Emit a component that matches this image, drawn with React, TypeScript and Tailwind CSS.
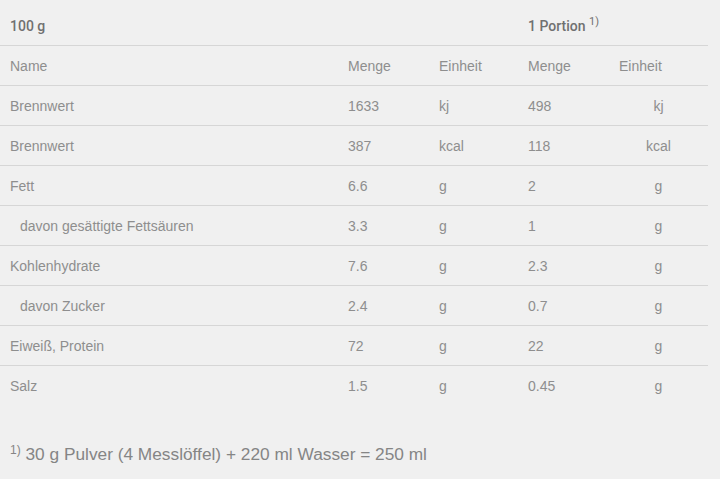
const rows = [
  { name: "Brennwert", m1: "1633", u1: "kj", m2: "498", u2: "kj" },
  { name: "Brennwert", m1: "387", u1: "kcal", m2: "118", u2: "kcal" },
  { name: "Fett", m1: "6.6", u1: "g", m2: "2", u2: "g" },
  { name: "davon gesättigte Fettsäuren", m1: "3.3", u1: "g", m2: "1", u2: "g", sub: true },
  { name: "Kohlenhydrate", m1: "7.6", u1: "g", m2: "2.3", u2: "g" },
  { name: "davon Zucker", m1: "2.4", u1: "g", m2: "0.7", u2: "g", sub: true },
  { name: "Eiweiß, Protein", m1: "72", u1: "g", m2: "22", u2: "g" },
  { name: "Salz", m1: "1.5", u1: "g", m2: "0.45", u2: "g" },
];

export default function App() {
  return (
    <div
      className="min-h-[479px] w-[720px] bg-[#f0f0f0] text-[14px] text-[#8e8e8e]"
      style={{ fontFamily: '"Liberation Sans", Arial, sans-serif' }}
    >
      <table className="w-[708px] table-fixed border-collapse">
        <colgroup>
          <col className="w-[338px]" />
          <col className="w-[91px]" />
          <col className="w-[89px]" />
          <col className="w-[91px]" />
          <col className="w-[99px]" />
        </colgroup>
        <thead>
          <tr
            className="h-[45px] border-b border-[#d6d6d6] text-[#707070]"
            style={{ fontFamily: "Roboto, Arial, sans-serif" }}
          >
            <th className="px-[10px] pt-[8px] text-left font-medium">100 g</th>
            <th />
            <th />
            <th colSpan={2} className="px-[10px] pt-[8px] text-left font-medium">
              1 Portion{" "}
              <sup className="text-[11px] font-normal">1)</sup>
            </th>
          </tr>
          <tr className="h-[40px] border-b border-[#d6d6d6]">
            <th className="px-[10px] pt-[3px] text-left font-normal">Name</th>
            <th className="px-[10px] pt-[3px] text-left font-normal">Menge</th>
            <th className="px-[10px] pt-[3px] text-left font-normal">Einheit</th>
            <th className="px-[10px] pt-[3px] text-left font-normal">Menge</th>
            <th className="px-[10px] pt-[3px] text-left font-normal">Einheit</th>
          </tr>
        </thead>
        <tbody>
          {rows.map((r, i) => (
            <tr
              key={i}
              className={`h-[40px] ${i < rows.length - 1 ? "border-b border-[#d6d6d6]" : ""}`}
            >
              <td className={`pt-[3px] pr-[10px] ${r.sub ? "pl-[20px]" : "pl-[10px]"}`}>
                {r.name}
              </td>
              <td className="px-[10px] pt-[3px]">{r.m1}</td>
              <td className="px-[10px] pt-[3px]">{r.u1}</td>
              <td className="px-[10px] pt-[3px]">{r.m2}</td>
              <td className="px-[10px] pt-[3px] text-center">{r.u2}</td>
            </tr>
          ))}
        </tbody>
      </table>
      <p className="mt-[37px] px-[10px] text-[17.3px] text-[#858585]">
        <sup className="text-[12px]">1)</sup> 30 g Pulver (4 Messlöffel) + 220 ml Wasser = 250 ml
      </p>
    </div>
  );
}
